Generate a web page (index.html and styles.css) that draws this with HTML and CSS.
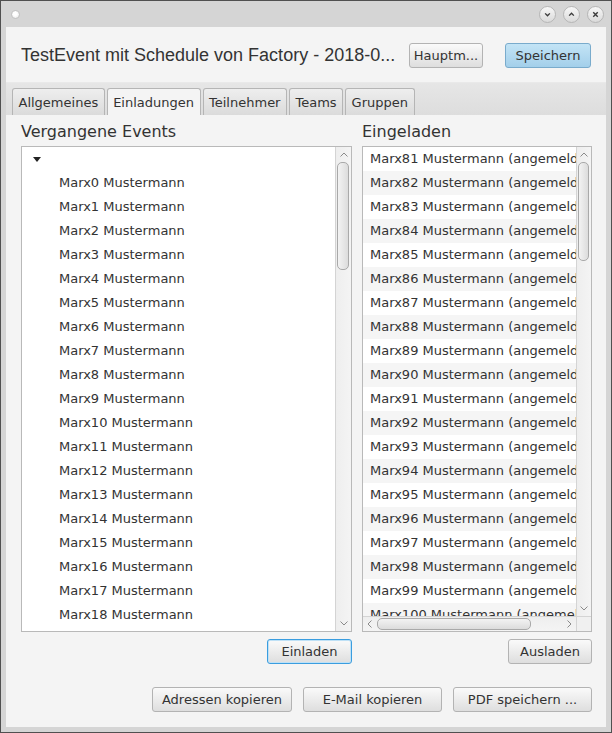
FILE: index.html
```html
<!DOCTYPE html>
<html lang="de">
<head>
<meta charset="utf-8">
<title>TestEvent</title>
<link rel="stylesheet" href="styles.css">
</head>
<body>
<div class="window">
  <div class="titlebar">
    <span class="dot"></span>
    <div class="controls">
      <span class="ctl"><svg viewBox="0 0 16 16"><path d="M5.5 6.8L8 9.3L10.5 6.8"/></svg></span>
      <span class="ctl"><svg viewBox="0 0 16 16"><path d="M5.5 9.2L8 6.7L10.5 9.2"/></svg></span>
      <span class="ctl"><svg viewBox="0 0 16 16"><path d="M5.6 5.6L10.4 10.4M10.4 5.6L5.6 10.4"/></svg></span>
    </div>
  </div>
  <div class="content">
    <header class="header">
      <h1 class="title">TestEvent mit Schedule von Factory - 2018-0...</h1>
      <button class="btn btn-haupt">Hauptm...</button>
      <button class="btn btn-primary btn-save">Speichern</button>
    </header>
    <div class="tabpane">
      <div class="tabs">
        <div class="tab">Allgemeines</div>
        <div class="tab selected">Einladungen</div>
        <div class="tab">Teilnehmer</div>
        <div class="tab">Teams</div>
        <div class="tab">Gruppen</div>
      </div>
      <div class="tabcontent">
        <div class="columns">
          <section class="col">
            <h2 class="heading">Vergangene Events</h2>
            <div class="listbox tree-box">
              <div class="rows">
                <div class="row root"><span class="disclosure"></span></div>
                <div class="row leaf">Marx0 Mustermann</div>
                <div class="row leaf">Marx1 Mustermann</div>
                <div class="row leaf">Marx2 Mustermann</div>
                <div class="row leaf">Marx3 Mustermann</div>
                <div class="row leaf">Marx4 Mustermann</div>
                <div class="row leaf">Marx5 Mustermann</div>
                <div class="row leaf">Marx6 Mustermann</div>
                <div class="row leaf">Marx7 Mustermann</div>
                <div class="row leaf">Marx8 Mustermann</div>
                <div class="row leaf">Marx9 Mustermann</div>
                <div class="row leaf">Marx10 Mustermann</div>
                <div class="row leaf">Marx11 Mustermann</div>
                <div class="row leaf">Marx12 Mustermann</div>
                <div class="row leaf">Marx13 Mustermann</div>
                <div class="row leaf">Marx14 Mustermann</div>
                <div class="row leaf">Marx15 Mustermann</div>
                <div class="row leaf">Marx16 Mustermann</div>
                <div class="row leaf">Marx17 Mustermann</div>
                <div class="row leaf">Marx18 Mustermann</div>
                <div class="row leaf">Marx19 Mustermann</div>
              </div>
              <div class="vscroll">
                <div class="arrow arrow-up"><svg viewBox="0 0 8 5"><path d="M0.5 4.5L4 1L7.5 4.5"/></svg></div>
                <div class="track"><div class="thumb thumb-left"></div></div>
                <div class="arrow arrow-down"><svg viewBox="0 0 8 5"><path d="M0.5 0.5L4 4L7.5 0.5"/></svg></div>
              </div>
            </div>
            <div class="actions"><button class="btn btn-focus btn-einladen">Einladen</button></div>
          </section>
          <section class="col">
            <h2 class="heading">Eingeladen</h2>
            <div class="listbox list-box">
              <div class="rows list-rows">
                <div class="row item">Marx81 Mustermann (angemeldet)</div>
                <div class="row item">Marx82 Mustermann (angemeldet)</div>
                <div class="row item">Marx83 Mustermann (angemeldet)</div>
                <div class="row item">Marx84 Mustermann (angemeldet)</div>
                <div class="row item">Marx85 Mustermann (angemeldet)</div>
                <div class="row item">Marx86 Mustermann (angemeldet)</div>
                <div class="row item">Marx87 Mustermann (angemeldet)</div>
                <div class="row item">Marx88 Mustermann (angemeldet)</div>
                <div class="row item">Marx89 Mustermann (angemeldet)</div>
                <div class="row item">Marx90 Mustermann (angemeldet)</div>
                <div class="row item">Marx91 Mustermann (angemeldet)</div>
                <div class="row item">Marx92 Mustermann (angemeldet)</div>
                <div class="row item">Marx93 Mustermann (angemeldet)</div>
                <div class="row item">Marx94 Mustermann (angemeldet)</div>
                <div class="row item">Marx95 Mustermann (angemeldet)</div>
                <div class="row item">Marx96 Mustermann (angemeldet)</div>
                <div class="row item">Marx97 Mustermann (angemeldet)</div>
                <div class="row item">Marx98 Mustermann (angemeldet)</div>
                <div class="row item">Marx99 Mustermann (angemeldet)</div>
                <div class="row item">Marx100 Mustermann (angemeldet)</div>
              </div>
              <div class="vscroll list-vscroll">
                <div class="arrow arrow-up"><svg viewBox="0 0 8 5"><path d="M0.5 4.5L4 1L7.5 4.5"/></svg></div>
                <div class="track"><div class="thumb thumb-right"></div></div>
                <div class="arrow arrow-down"><svg viewBox="0 0 8 5"><path d="M0.5 0.5L4 4L7.5 0.5"/></svg></div>
              </div>
              <div class="hscroll">
                <div class="harrow"><svg viewBox="0 0 5 8"><path d="M4.5 0.5L1 4L4.5 7.5"/></svg></div>
                <div class="htrack"><div class="hthumb"></div></div>
                <div class="harrow"><svg viewBox="0 0 5 8"><path d="M0.5 0.5L4 4L0.5 7.5"/></svg></div>
              </div>
              <div class="corner"></div>
            </div>
            <div class="actions"><button class="btn btn-ausladen">Ausladen</button></div>
          </section>
        </div>
        <div class="bottom">
          <button class="btn btn-wide btn-wide-first">Adressen kopieren</button>
          <button class="btn btn-wide">E-Mail kopieren</button>
          <button class="btn btn-wide">PDF speichern ...</button>
        </div>
      </div>
    </div>
  </div>
</div>
</body>
</html>
```

FILE: styles.css
```css
* { box-sizing: border-box; }
html, body { margin: 0; padding: 0; }
body {
  width: 612px;
  height: 733px;
  overflow: hidden;
  font-family: "DejaVu Sans", sans-serif;
  font-size: 13px;
  color: #333;
  background: #d6d6d6;
}

.window {
  width: 612px;
  height: 733px;
  border: 1px solid #505050;
  background: #d5d5d5;
  display: flex;
  flex-direction: column;
  padding: 0 5px 5px 5px;
}

/* title bar */
.titlebar {
  height: 26px;
  margin: 0 -5px;
  padding: 0 7px 0 10px;
  display: flex;
  align-items: center;
}
.dot {
  width: 9px;
  height: 9px;
  border-radius: 50%;
  border: 1px solid #c2c2c2;
  background: radial-gradient(circle at 45% 40%, #ffffff 30%, #e4e4e4 100%);
}
.controls {
  margin-left: auto;
  display: flex;
  gap: 7px;
}
.ctl {
  width: 17px;
  height: 17px;
  border-radius: 50%;
  border: 1px solid #b6b6b6;
  background: linear-gradient(#f7f7f7, #dadada);
  display: flex;
  align-items: center;
  justify-content: center;
}
.ctl svg {
  width: 15px;
  height: 15px;
  fill: none;
  stroke: #3a3a3a;
  stroke-width: 1.5;
}

/* content */
.content {
  flex: 1;
  background: #f4f4f4;
  display: flex;
  flex-direction: column;
  min-height: 0;
}
.header {
  height: 55px;
  display: flex;
  align-items: center;
  padding: 1px 15px 0 15px;
}
.title {
  flex: 1;
  min-width: 0;
  margin: 0;
  font-family: "Liberation Sans", Arial, sans-serif;
  font-size: 18px;
  font-weight: normal;
  color: #333;
  white-space: nowrap;
  overflow: hidden;
}

/* buttons */
.btn {
  height: 25px;
  padding: 0 8px;
  border: 1px solid #b3b3b3;
  border-radius: 3px;
  background: linear-gradient(#fafafa, #dedede);
  font-family: "DejaVu Sans", sans-serif;
  font-size: 13px;
  color: #333;
  line-height: 23px;
  white-space: nowrap;
}
.btn-haupt { width: 74px; margin-left: 11px; padding: 0 2px; }
.btn-save { width: 86px; margin-left: 22px; }
.btn-primary {
  border-color: #79abcc;
  background: linear-gradient(#c3e4f6, #a3cfea);
}
.btn-focus {
  border-color: #3a9ddf;
  box-shadow: inset 0 0 0 1px #bfe1f6;
}
.btn-einladen { width: 85px; }
.btn-ausladen { width: 84px; }
.btn-wide { width: 139px; }
.btn-wide-first { width: 140px; }

/* tabs */
.tabpane {
  flex: 1;
  display: flex;
  flex-direction: column;
  min-height: 0;
}
.tabs {
  height: 33px;
  padding: 6px 0 0 6px;
  display: flex;
  align-items: flex-end;
  gap: 2px;
  background: linear-gradient(#e6e6e6, #dddddd);
  border-top: 1px solid #e9e9e9;
}
.tab {
  height: 27px;
  padding: 0 5.5px;
  border: 1px solid #b5b5b5;
  border-bottom: none;
  border-radius: 3px 3px 0 0;
  background: linear-gradient(#eeeeee, #dbdbdb);
  line-height: 27px;
  white-space: nowrap;
}
.tab.selected {
  background: #f4f4f4;
}

.tabcontent {
  flex: 1;
  min-height: 0;
  display: flex;
  flex-direction: column;
  padding: 7px 14px 15px 15px;
}
.columns {
  flex: 1;
  min-height: 0;
  display: grid;
  grid-template-columns: 331px 230px;
  column-gap: 10px;
}
.col {
  display: flex;
  flex-direction: column;
  min-height: 0;
}
.heading {
  margin: 0 0 5px 0;
  font-size: 16px;
  font-weight: normal;
  line-height: 19px;
  color: #333;
}

/* list boxes */
.listbox {
  flex: 1;
  min-height: 0;
  border: 1px solid #b9b9b9;
  background: #ffffff;
  overflow: hidden;
}
.tree-box {
  display: flex;
}
.list-box {
  display: grid;
  grid-template-columns: 1fr 15px;
  grid-template-rows: 1fr 15px;
}
.rows {
  flex: 1;
  min-width: 0;
  overflow: hidden;
}
.row {
  height: 24px;
  line-height: 24px;
  white-space: nowrap;
  overflow: hidden;
}
.root {
  padding-left: 11px;
  display: flex;
  align-items: center;
}
.disclosure {
  width: 0;
  height: 0;
  border-left: 4px solid transparent;
  border-right: 4px solid transparent;
  border-top: 5px solid #222;
}
.leaf { padding-left: 37px; }
.item { padding-left: 7px; }
.item:nth-child(even) { background: #f5f5f5; }

/* scrollbars */
.vscroll {
  width: 16px;
  display: flex;
  flex-direction: column;
  background: linear-gradient(to right, #eeeeee, #f4f4f4);
  border-left: 1px solid #d4d4d4;
}
.list-vscroll { width: 15px; }
.arrow {
  height: 15px;
  display: flex;
  align-items: center;
  justify-content: center;
}
.arrow svg {
  width: 8px;
  height: 5px;
  fill: none;
  stroke: #8a8a8a;
  stroke-width: 1;
}
.track {
  flex: 1;
  padding: 0 2px 0 1px;
}
.thumb {
  border: 1px solid #a9a9a9;
  border-radius: 5px;
  background: linear-gradient(to right, #f3f3f3, #dcdcdc);
}
.thumb-left { height: 108px; }
.thumb-right { height: 99px; }

.hscroll {
  display: flex;
  align-items: center;
  background: linear-gradient(#eeeeee, #f4f4f4);
  border-top: 1px solid #d4d4d4;
}
.harrow {
  width: 13px;
  height: 14px;
  display: flex;
  align-items: center;
  justify-content: center;
}
.harrow svg {
  width: 5px;
  height: 8px;
  fill: none;
  stroke: #8a8a8a;
  stroke-width: 1;
}
.htrack {
  flex: 1;
  height: 14px;
  padding: 1px 0 0 1px;
}
.hthumb {
  width: 154px;
  height: 12px;
  border: 1px solid #a9a9a9;
  border-radius: 5px;
  background: linear-gradient(#f3f3f3, #dcdcdc);
}
.corner {
  background: #f0f0f0;
  border-left: 1px solid #d4d4d4;
  border-top: 1px solid #d4d4d4;
}

.actions {
  display: flex;
  justify-content: flex-end;
  margin-top: 7px;
}

.bottom {
  display: flex;
  justify-content: flex-end;
  gap: 11px;
  margin-top: 23px;
}
```
